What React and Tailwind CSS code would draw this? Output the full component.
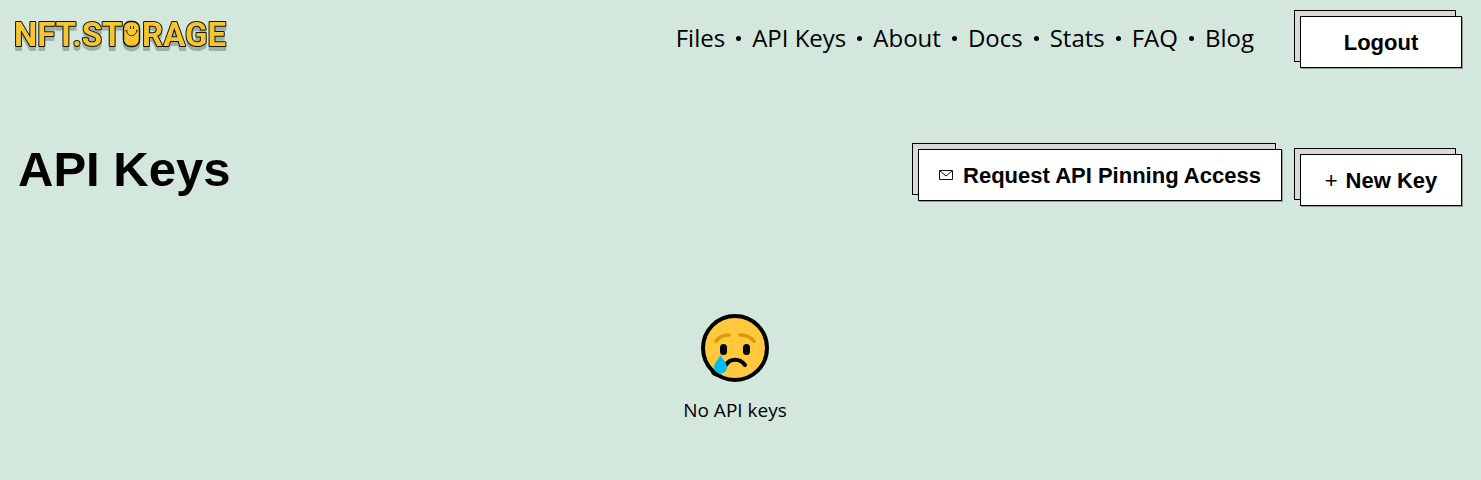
import React from "react";

const links = ["Files", "API Keys", "About", "Docs", "Stats", "FAQ", "Blog"];

function Logo() {
  return (
    <svg
      viewBox="-2 -6 220 48"
      className="h-12 w-[220px] font-['Roboto',sans-serif] text-[33px] font-bold drop-shadow-[0_4px_0_#9eafa6]"
      role="img"
      aria-label="NFT.STORAGE"
    >
      <g fill="#f7c52d" stroke="#111" strokeWidth="2" strokeLinejoin="round" paintOrder="stroke">
        <text x="0" y="30">NFT.ST</text>
        <text x="128" y="30">RAGE</text>
      </g>
      <rect x="109.500" y="5.500" width="16" height="25" rx="6.500" fill="#f7c52d" stroke="#111" strokeWidth="1.4" />
      <path d="M116.500 10v3M119.500 10v3M112.500 14.500c1 7 9 7 10.500 0M111.500 15l2-1M122 14l2 1" fill="none" stroke="#3a2d08" strokeWidth="1" />
    </svg>
  );
}

function Button({ children, className = "" }) {
  return (
    <button
      type="button"
      className={
        "relative isolate h-[52px] whitespace-nowrap font-['Liberation_Sans',sans-serif] text-[22px] font-bold text-black " +
        className
      }
    >
      <span className="absolute -top-1.5 right-1.5 bottom-1.5 -left-1.5 -z-20 border border-black bg-[#d9d9d9]" />
      <span className="absolute inset-0 -z-10 border border-black bg-white shadow-[1px_1px_0_#8f9b95]" />
      <span className="flex items-center justify-center">{children}</span>
    </button>
  );
}

function Envelope() {
  return (
    <svg viewBox="0 0 14 10" className="mr-2.5 h-2.5 w-3.5" fill="none" stroke="#111" aria-hidden="true">
      <path d="M.5.5h13v9H.5zM1 1l6 5 6-5" />
    </svg>
  );
}

function CryingFace() {
  return (
    <svg viewBox="0 0 68 68" className="size-[68px]" aria-hidden="true">
      <circle cx="34" cy="34" r="32" fill="#ffc83d" stroke="#000" strokeWidth="4" />
      <path d="M12 55c-4 5 4 8 9 7" fill="#000" stroke="#000" strokeWidth="2" />
      <path d="M15 27q5-6 13-6M39 21q9 0 14 6" fill="none" stroke="#d99a0b" strokeWidth="3.6" strokeLinecap="round" />
      <rect x="19" y="30" width="7" height="11" rx="3.5" />
      <rect x="42" y="30" width="7" height="11" rx="3.5" />
      <path d="M25 51c4-7 14-7 19 0" fill="none" stroke="#000" strokeWidth="4" strokeLinecap="round" />
      <path d="M19.500 41C17 46 13 49 13 53.500a6.500 6 0 0 0 13 0C26 49 22 46 19.500 41z" fill="#00bcf2" />
    </svg>
  );
}

export default function App() {
  return (
    <div className="min-h-screen bg-[#d3e7dc] pr-[19px] pl-2 font-['Open_Sans','Noto_Sans',sans-serif] text-black">
      <header className="flex items-start justify-between pt-2.5 pl-1">
        <a href="#home" aria-label="NFT.STORAGE">
          <Logo />
        </a>
        <div className="flex items-start pt-1.5">
          <nav className="mr-[46px] pt-1">
            <ul className="flex items-center text-[24px] leading-9">
              {links.map((label, i) => (
                <li key={label} className="flex items-center">
                  {i > 0 && <span className="mx-[11px] size-[5px] rounded-full bg-black" />}
                  <a href={"#" + label.toLowerCase().replace(" ", "-")}>{label}</a>
                </li>
              ))}
            </ul>
          </nav>
          <Button className="w-[162px]">Logout</Button>
        </div>
      </header>
      <main>
        <div className="flex items-start justify-between pt-[75px] pl-2.5">
          <h1 className="font-['Liberation_Sans',sans-serif] text-[49px] leading-[52px] font-bold">API Keys</h1>
          <div className="flex items-start gap-[18px] pt-1.5">
            <Button className="w-[364px]">
              <Envelope />
              Request API Pinning Access
            </Button>
            <Button className="mt-[5px] w-[162px]">
              <span className="mr-2 font-normal">+</span>
              New Key
            </Button>
          </div>
        </div>
        <div className="flex flex-col items-center pt-[108px]">
          <CryingFace />
          <p className="mt-4 text-[19px] leading-6">No API keys</p>
        </div>
      </main>
    </div>
  );
}
